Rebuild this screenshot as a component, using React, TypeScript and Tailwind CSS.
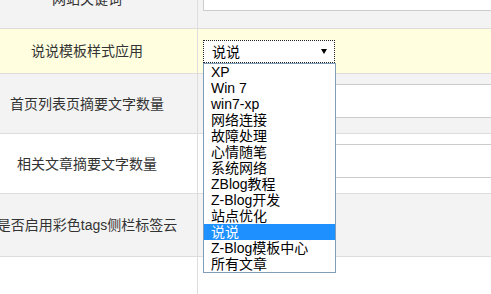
import React from "react";

const FONT = '"Liberation Sans", "Noto Sans CJK SC", Arial, sans-serif';

const items = [
  "XP",
  "Win 7",
  "win7-xp",
  "网络连接",
  "故障处理",
  "心情随笔",
  "系统网络",
  "ZBlog教程",
  "Z-Blog开发",
  "站点优化",
  "说说",
  "Z-Blog模板中心",
  "所有文章",
];

function Label({ text }: { text: string }) {
  return (
    <div className="w-[198px] shrink-0 self-stretch border-r border-[#dddddd] flex items-center">
      <div className="w-[174px] flex justify-center whitespace-nowrap text-[14px] text-[#333333] leading-[16px]">
        {text}
      </div>
    </div>
  );
}

function Input() {
  return <div className="w-[420px] h-[34px] shrink-0 border border-[#cccccc] bg-white" />;
}

export default function App() {
  return (
    <div
      className="relative w-[491px] h-[294px] overflow-hidden bg-white"
      style={{ fontFamily: FONT }}
    >
      <div className="-mt-[31px]">
        {/* Row 1 */}
        <div className="flex h-[60px] bg-[#f3f3f3] border-b border-[#dddddd]">
          <Label text="网站关键词" />
          <div className="pl-[5px] pt-[8px] flex">
            <Input />
          </div>
        </div>
        {/* Row 2 */}
        <div className="flex h-[45px] bg-[#ffffe0] border-b border-[#dddddd]">
          <Label text="说说模板样式应用" />
          <div className="pl-[5px] pt-[11px]">
            <div className="w-[132px] h-[23px] bg-white border border-dotted border-[#222222] flex items-center justify-between pl-[8px] pr-[7px]">
              <span className="text-[14px] leading-[16px] text-black">说说</span>
              <svg width="6" height="5" viewBox="0 0 6 5">
                <polygon points="0,0 6,0 3,5" fill="#000" />
              </svg>
            </div>
          </div>
        </div>
        {/* Row 3 */}
        <div className="flex h-[60px] bg-[#f3f3f3] border-b border-[#dddddd]">
          <Label text="首页列表页摘要文字数量" />
          <div className="pl-[5px] pt-[10px] flex">
            <Input />
          </div>
        </div>
        {/* Row 4 */}
        <div className="flex h-[60px] bg-white border-b border-[#dddddd]">
          <Label text="相关文章摘要文字数量" />
          <div className="pl-[5px] pt-[10px] flex">
            <Input />
          </div>
        </div>
        {/* Row 5 */}
        <div className="flex h-[63px] bg-[#f3f3f3] border-b border-[#dddddd]">
          <Label text="是否启用彩色tags侧栏标签云" />
          <div />
        </div>
        {/* Row 6 */}
        <div className="flex h-[80px] bg-white">
          <Label text="" />
        </div>
      </div>

      {/* Dropdown list */}
      <div className="absolute left-[203px] top-[63px] w-[133px] h-[210px] bg-white border border-[#7f9db9]">
        {items.map((it) => (
          <div
            key={it}
            className={
              it === "说说"
                ? "h-[16px] leading-[16px] text-[14px] pl-[7px] whitespace-nowrap bg-[#1e90ff] text-white"
                : "h-[16px] leading-[16px] text-[14px] pl-[7px] whitespace-nowrap text-black"
            }
          >
            {it}
          </div>
        ))}
      </div>
    </div>
  );
}
